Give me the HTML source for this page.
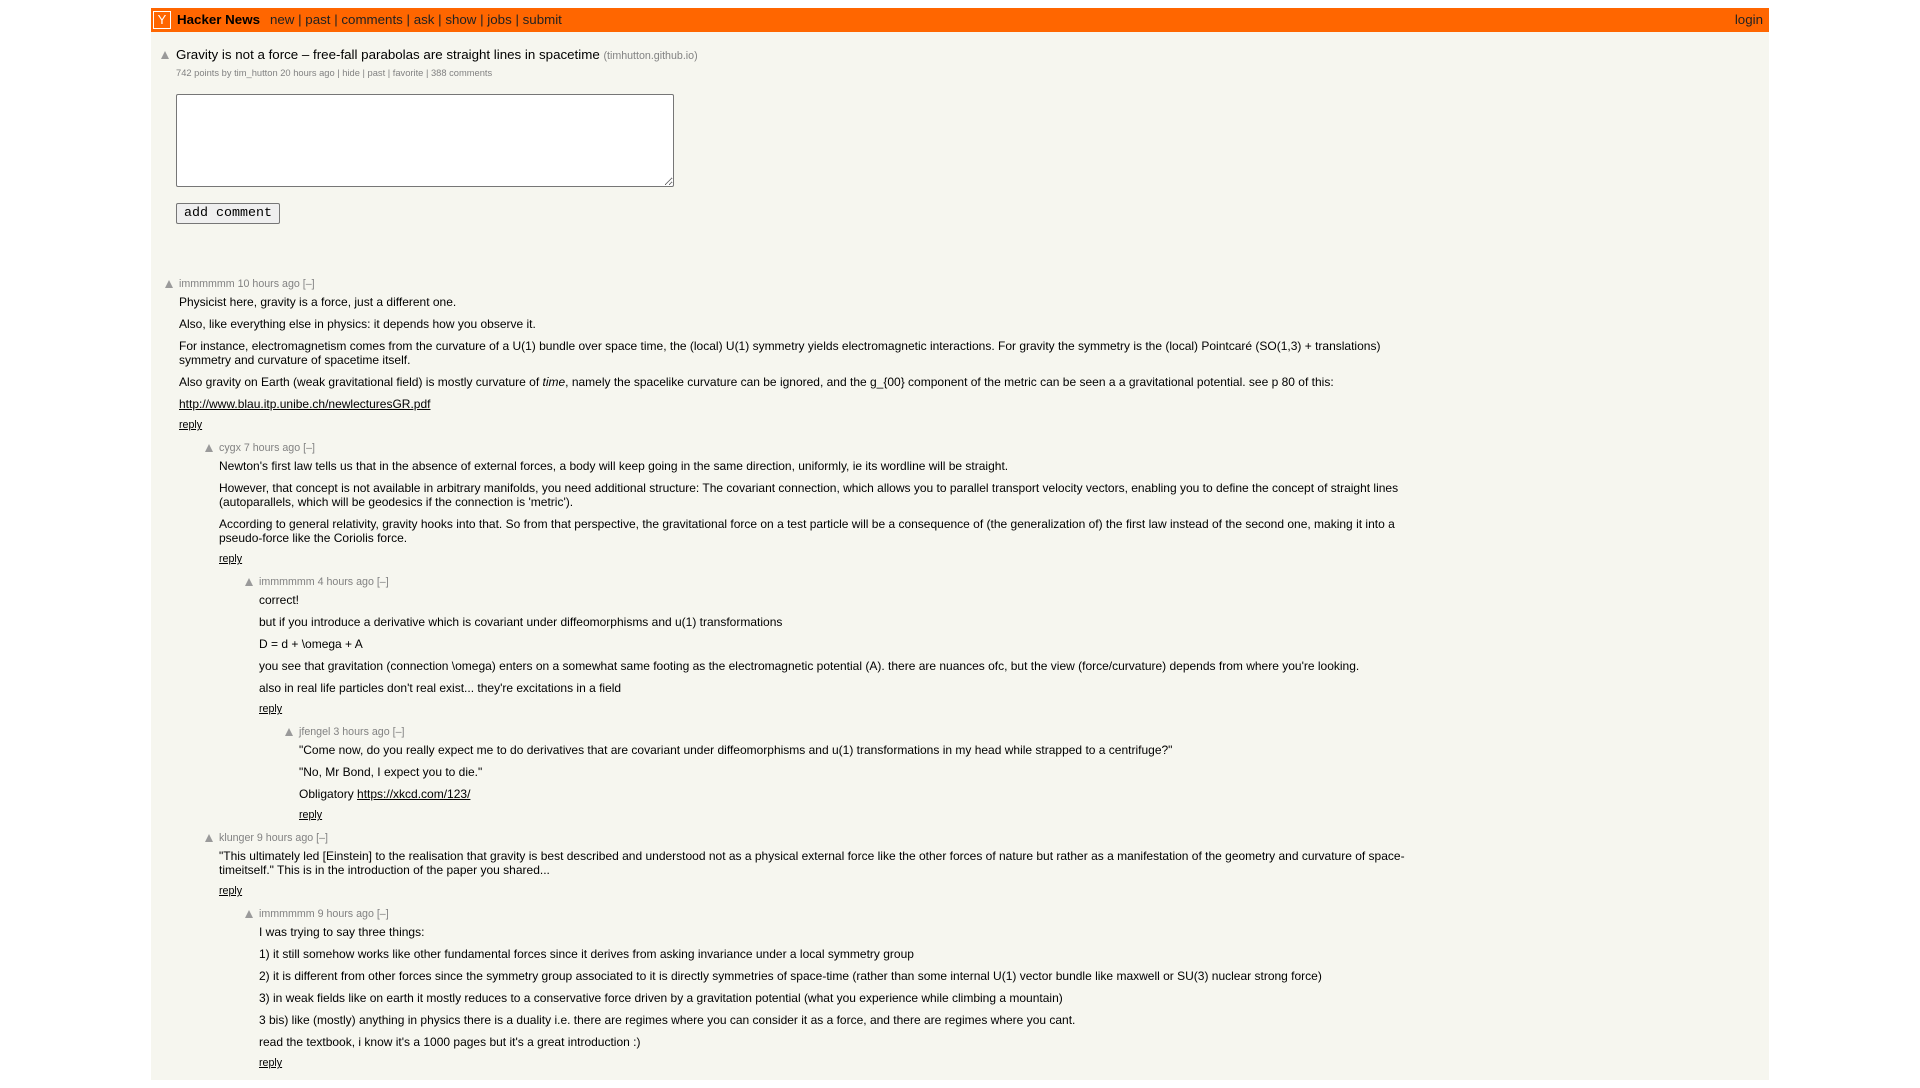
<!DOCTYPE html>
<html><head><meta charset="utf-8"><style>
body{margin:8px;background:#fff;font-family:"Liberation Sans",Arial,sans-serif;}
#wrap{width:1618px;margin:0 auto;background:#f6f6ef;min-height:1072px;position:relative;}
#hdr{background:#ff6600;height:24px;position:relative;font-size:13.33px;line-height:24px;color:#222;}
#hdr .logo{position:absolute;left:2px;top:3px;width:16px;height:16px;border:1px solid #fff;color:#fff;font-size:13px;line-height:16px;text-align:center;}
#hdr .nav{position:absolute;left:26px;top:0;}
#hdr b{color:#000;margin-right:10px;}
#hdr .login{position:absolute;right:6px;top:0;}
a{color:inherit;text-decoration:none;}
.arrow{position:absolute;width:0;height:0;border-left:4.5px solid transparent;border-right:4.5px solid transparent;border-bottom:8px solid #9a9a9a;}
.title{position:absolute;left:25px;top:39px;font-size:13.33px;color:#000;}
.title .site{font-size:10.67px;color:#828282;}
.sub{position:absolute;left:25px;top:60px;font-size:9.33px;color:#828282;}
textarea{position:absolute;left:25px;top:86px;border:1px solid #767676;background:#fff;margin:0;padding:0;box-sizing:border-box;width:498px;height:93px;border-radius:2px;}
.btn{position:absolute;left:25px;top:195px;width:102px;height:19px;border:1px solid #767676;border-radius:2px;background:#efefef;font-family:"Liberation Mono",monospace;font-size:13.33px;line-height:19px;text-align:center;color:#000;}
#comments{position:absolute;left:0;top:269px;width:1600px;}
.c{position:relative;margin-bottom:9px;}
.head{height:14px;line-height:14px;font-size:10.67px;color:#828282;margin-bottom:4px;}
.txt{font-size:12px;color:#000;max-width:1215px;}
.txt p{margin:8px 0 0;line-height:14px;}
.txt p:first-child{margin-top:0;}
.txt a{text-decoration:underline;}
.reply{margin-top:7px;height:14px;line-height:14px;font-size:10.67px;}
.reply a{text-decoration:underline;color:#000;}
.c .arrow{left:-14px;top:3px;}
</style></head><body>
<div id="wrap">
<div id="hdr"><div class="logo">Y</div><div class="nav"><b>Hacker News</b>new | past | comments | ask | show | jobs | submit</div><div class="login">login</div></div>
<div class="arrow" style="left:10px;top:43px"></div>
<div class="title">Gravity is not a force – free-fall parabolas are straight lines in spacetime <span class="site">(timhutton.github.io)</span></div>
<div class="sub">742 points by tim_hutton 20 hours ago | hide | past | favorite | 388 comments</div>
<textarea></textarea>
<div class="btn">add comment</div>
<div id="comments">
<div class="c" style="margin-left:28px"><div class="arrow"></div>
<div class="head">immmmmm 10 hours ago [–]</div>
<div class="txt"><p>Physicist here, gravity is a force, just a different one.</p><p>Also, like everything else in physics: it depends how you observe it.</p><p>For instance, electromagnetism comes from the curvature of a U(1) bundle over space time, the (local) U(1) symmetry yields electromagnetic interactions. For gravity the symmetry is the (local) Pointcaré (SO(1,3) + translations) symmetry and curvature of spacetime itself.</p><p>Also gravity on Earth (weak gravitational field) is mostly curvature of <i>time</i>, namely the spacelike curvature can be ignored, and the g_{00} component of the metric can be seen a a gravitational potential. see p 80 of this:</p><p><a>http://www.blau.itp.unibe.ch/newlecturesGR.pdf</a></p></div>
<div class="reply"><a>reply</a></div></div>
<div class="c" style="margin-left:68px"><div class="arrow"></div>
<div class="head">cygx 7 hours ago [–]</div>
<div class="txt"><p>Newton's first law tells us that in the absence of external forces, a body will keep going in the same direction, uniformly, ie its wordline will be straight.</p><p>However, that concept is not available in arbitrary manifolds, you need additional structure: The covariant connection, which allows you to parallel transport velocity vectors, enabling you to define the concept of straight lines (autoparallels, which will be geodesics if the connection is 'metric').</p><p>According to general relativity, gravity hooks into that. So from that perspective, the gravitational force on a test particle will be a consequence of (the generalization of) the first law instead of the second one, making it into a pseudo-force like the Coriolis force.</p></div>
<div class="reply"><a>reply</a></div></div>
<div class="c" style="margin-left:108px"><div class="arrow"></div>
<div class="head">immmmmm 4 hours ago [–]</div>
<div class="txt"><p>correct!</p><p>but if you introduce a derivative which is covariant under diffeomorphisms and u(1) transformations</p><p>D = d + \omega + A</p><p>you see that gravitation (connection \omega) enters on a somewhat same footing as the electromagnetic potential (A). there are nuances ofc, but the view (force/curvature) depends from where you're looking.</p><p>also in real life particles don't real exist... they're excitations in a field</p></div>
<div class="reply"><a>reply</a></div></div>
<div class="c" style="margin-left:148px"><div class="arrow"></div>
<div class="head">jfengel 3 hours ago [–]</div>
<div class="txt"><p>"Come now, do you really expect me to do derivatives that are covariant under diffeomorphisms and u(1) transformations in my head while strapped to a centrifuge?"</p><p>"No, Mr Bond, I expect you to die."</p><p>Obligatory <a>https://xkcd.com/123/</a></p></div>
<div class="reply"><a>reply</a></div></div>
<div class="c" style="margin-left:68px"><div class="arrow"></div>
<div class="head">klunger 9 hours ago [–]</div>
<div class="txt"><p>"This ultimately led [Einstein] to the realisation that gravity is best described and understood not as a physical external force like the other forces of nature but rather as a manifestation of the geometry and curvature of space-timeitself." This is in the introduction of the paper you shared...</p></div>
<div class="reply"><a>reply</a></div></div>
<div class="c" style="margin-left:108px"><div class="arrow"></div>
<div class="head">immmmmm 9 hours ago [–]</div>
<div class="txt"><p>I was trying to say three things:</p><p>1) it still somehow works like other fundamental forces since it derives from asking invariance under a local symmetry group</p><p>2) it is different from other forces since the symmetry group associated to it is directly symmetries of space-time (rather than some internal U(1) vector bundle like maxwell or SU(3) nuclear strong force)</p><p>3) in weak fields like on earth it mostly reduces to a conservative force driven by a gravitation potential (what you experience while climbing a mountain)</p><p>3 bis) like (mostly) anything in physics there is a duality i.e. there are regimes where you can consider it as a force, and there are regimes where you cant.</p><p>read the textbook, i know it's a 1000 pages but it's a great introduction :)</p></div>
<div class="reply"><a>reply</a></div></div>
</div>
</div>
</body></html>
